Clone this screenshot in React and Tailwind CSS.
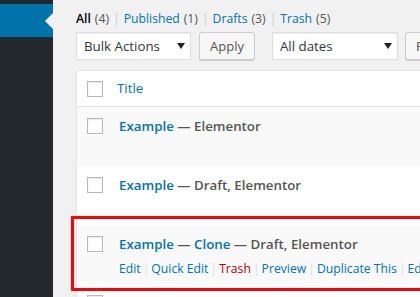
import React from 'react';

const font = { fontFamily: '"Open Sans", "Noto Sans", sans-serif' };

function Checkbox() {
    return (
        <span className="block w-4 h-4 shrink-0 bg-white border border-[#b4b9be] shadow-[inset_0_1px_2px_rgba(0,0,0,0.1)]" />
    );
}

function Select({ label, width }) {
    return (
        <div className={`${width} h-[28px] flex items-center justify-between bg-white border border-[#ddd] shadow-[inset_0_1px_2px_rgba(0,0,0,0.07)] pl-[7px] pr-[5px] text-[13.3px] text-[#32373c]`}>
            <span className="mt-[1px]">{label}</span>
            <svg width="8" height="6" viewBox="0 0 8 6"><path d="M0 0h8L4 6z" fill="#222" /></svg>
        </div>
    );
}

function Button({ children, className = '' }) {
    return (
        <div className={`h-[28px] flex items-center bg-[#f7f7f7] border border-[#ccc] rounded-[3px] shadow-[0_1px_0_#ccc] px-[10px] text-[13px] text-[#555] ${className}`}>
            {children}
        </div>
    );
}

const Sep = () => <span className="text-[#ccc] mx-[4px]">|</span>;
const ActSep = () => <span className="text-[#ddd] mx-[2px]">|</span>;

export default function App() {
    return (
        <div className="w-[420px] h-[297px] overflow-hidden flex bg-[#f1f1f1] relative" style={font}>
            {/* Admin menu */}
            <div className="w-[53px] shrink-0 bg-[#23282d] flex flex-col">
                <div className="h-[4px]" />
                <div className="h-[33px] bg-[#0073aa] flex items-center justify-end">
                    <span className="w-0 h-0 border-y-[8px] border-y-transparent border-r-[8px] border-r-[#f1f1f1]" />
                </div>
                <div className="mt-[204px] -ml-[7px] text-[13px] leading-[14px] text-white">e</div>
            </div>

            {/* Content */}
            <div className="flex-1 pl-[23px] flex flex-col">
                {/* Views */}
                <div className="mt-[10px] h-[20px] flex items-center text-[12.2px] text-[#555] whitespace-nowrap">
                    <span className="font-semibold text-black">All</span>
                    <span className="ml-[4px]">(4)</span>
                    <Sep />
                    <span className="text-[#0073aa]">Published</span>
                    <span className="ml-[4px]">(1)</span>
                    <Sep />
                    <span className="text-[#0073aa]">Drafts</span>
                    <span className="ml-[4px]">(3)</span>
                    <Sep />
                    <span className="text-[#0073aa]">Trash</span>
                    <span className="ml-[4px]">(5)</span>
                </div>

                {/* Actions bar */}
                <div className="mt-[4px] flex items-center whitespace-nowrap">
                    <Select label="Bulk Actions" width="w-[115px]" />
                    <Button className="ml-[8px]">Apply</Button>
                    <Select label="All dates" width="w-[126px] ml-[17px]" />
                    <Button className="ml-[7px]">Filter</Button>
                </div>

                {/* Posts table */}
                <div className="mt-[10px] w-[420px] bg-white border border-[#e5e5e5] shadow-[0_1px_1px_rgba(0,0,0,0.04)]">
                    <div className="h-[36px] flex items-center pl-[10px] border-b border-[#e1e1e1]">
                        <Checkbox />
                        <span className="ml-[14px] mt-[1px] text-[13.3px] text-[#0073aa]">Title</span>
                    </div>

                    <div className="h-[59px] bg-[#f9f9f9] flex items-start pl-[10px] pt-[11px]">
                        <Checkbox />
                        <div className="ml-[16px] -mt-[1px] text-[13.3px] font-semibold whitespace-nowrap">
                            <span className="text-[#0073aa]">Example</span>
                            <span className="text-[#555]"> — Elementor</span>
                        </div>
                    </div>

                    <div className="h-[59px] bg-white flex items-start pl-[10px] pt-[11px]">
                        <Checkbox />
                        <div className="ml-[16px] -mt-[1px] text-[13.3px] font-semibold whitespace-nowrap">
                            <span className="text-[#0073aa]">Example</span>
                            <span className="text-[#555]"> — Draft, Elementor</span>
                        </div>
                    </div>

                    <div className="h-[59px] bg-[#f9f9f9] flex items-start pl-[10px] pt-[11px]">
                        <Checkbox />
                        <div className="ml-[16px] -mt-[1px] flex flex-col whitespace-nowrap">
                            <div className="text-[13.3px] font-semibold">
                                <span className="text-[#0073aa]">Example</span>
                                <span className="text-[#555]"> — </span>
                                <span className="text-[#0073aa]">Clone</span>
                                <span className="text-[#555]"> — Draft, Elementor</span>
                            </div>
                            <div className="mt-[5px] text-[12.2px] text-[#0073aa]">
                                <span>Edit</span>
                                <ActSep />
                                <span>Quick Edit</span>
                                <ActSep />
                                <span className="text-[#a00]">Trash</span>
                                <ActSep />
                                <span>Preview</span>
                                <ActSep />
                                <span>Duplicate This</span>
                                <ActSep />
                                <span>Edit with Elementor</span>
                            </div>
                        </div>
                    </div>

                    <div className="h-[59px] bg-white flex items-start pl-[10px] pt-[11px]">
                        <Checkbox />
                    </div>
                </div>
            </div>

            {/* Highlight annotation */}
            <div className="absolute left-[71px] top-[216px] w-[360px] h-[75px] border-[3px] border-[#ff0000] pointer-events-none" />
        </div>
    );
}
